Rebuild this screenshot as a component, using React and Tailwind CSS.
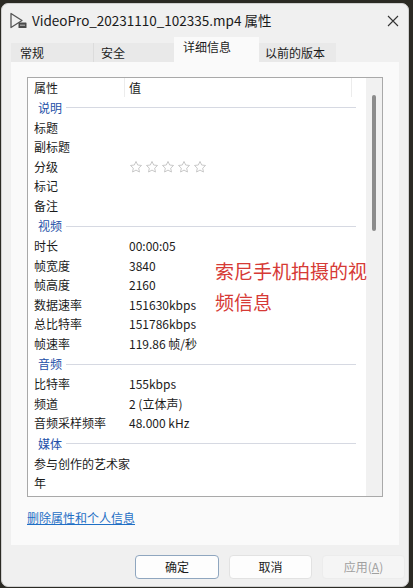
import React from 'react';

const font = { fontFamily: '"Segoe UI", "Noto Sans CJK SC", "Noto Sans", sans-serif' };

const sections = [
  { group: '说明', rows: [['标题', ''], ['副标题', ''], ['分级', 'stars'], ['标记', ''], ['备注', '']] },
  {
    group: '视频',
    rows: [
      ['时长', '00:00:05'],
      ['帧宽度', '3840'],
      ['帧高度', '2160'],
      ['数据速率', '151630kbps'],
      ['总比特率', '151786kbps'],
      ['帧速率', '119.86 帧/秒'],
    ],
  },
  { group: '音频', rows: [['比特率', '155kbps'], ['频道', '2 (立体声)'], ['音频采样频率', '48.000 kHz']] },
  { group: '媒体', rows: [['参与创作的艺术家', ''], ['年', ''], ['流派', '']] },
];

function Star() {
  return (
    <svg width="14" height="14" viewBox="0 0 24 24" fill="none" stroke="#c4c4c4" strokeWidth="1.6" strokeLinejoin="round">
      <path d="M12 2.5l2.9 6.1 6.6.8-4.9 4.6 1.3 6.6L12 17.3l-5.9 3.3 1.3-6.6-4.9-4.6 6.6-.8z" />
    </svg>
  );
}

function FileIcon() {
  return (
    <svg width="18" height="17" viewBox="0 0 18 17" fill="none">
      <path d="M2 1.5v14l11-7z" stroke="#555" strokeWidth="1.3" strokeLinejoin="round" />
      <rect x="9.5" y="10.5" width="8" height="5.5" rx="0.6" fill="#4a4a4a" />
      <path d="M11 13.2h5" stroke="#ddd" strokeWidth="0.8" />
    </svg>
  );
}

function Row({ label, value }) {
  return (
    <div className="flex items-center h-[19.5px] text-[12px] text-[#1b1b1b] whitespace-nowrap">
      <div className="w-[101px] pl-[6px] shrink-0">{label}</div>
      <div className="flex items-center">
        {value === 'stars' ? (
          <div className="flex gap-[2px]">
            {[0, 1, 2, 3, 4].map(i => <Star key={i} />)}
          </div>
        ) : (
          value
        )}
      </div>
    </div>
  );
}

function Group({ name }) {
  return (
    <div className="flex items-center h-[21px] pl-[10px] pr-[10px] text-[12px] text-[#2450a8]">
      <span>{name}</span>
      <div className="flex-1 h-px bg-[#d6d9e2] ml-[4px]" />
    </div>
  );
}

export default function App() {
  return (
    <div className="w-[413px] h-[588px] bg-[#2b2a24] overflow-hidden" style={font}>
      <div className="mt-[3px] ml-[1px] w-[408px] h-[584px] bg-[#f0f0f0] rounded-[7px] border border-[#cfcfcf] flex flex-col">
        {/* Title bar */}
        <div className="h-[33px] flex items-center pl-[7px] pr-[9px] shrink-0">
          <FileIcon />
          <span className="ml-[5px] text-[13.5px] text-[#1a1a1a] flex-1">VideoPro_20231110_102335.mp4 属性</span>
          <svg width="12" height="12" viewBox="0 0 12 12" stroke="#333" strokeWidth="1.1">
            <path d="M1 1l10 10M11 1L1 11" />
          </svg>
        </div>

        {/* Tabs */}
        <div className="h-[25px] flex items-end pl-[9px] shrink-0 text-[12px] text-[#1b1b1b]">
          <div className="w-[83px] h-[19px] bg-[#e9e9e9] border-r border-[#dcdcdc] pl-[9px] flex items-center">常规</div>
          <div className="w-[80px] h-[19px] bg-[#e9e9e9] pl-[7px] flex items-center">安全</div>
          <div className="w-[85px] h-[25px] bg-[#fafafa] pl-[9px] pb-[6px] flex items-center">详细信息</div>
          <div className="w-[77px] h-[19px] bg-[#e9e9e9] pl-[6px] flex items-center">以前的版本</div>
        </div>

        {/* Panel */}
        <div className="mx-[9px] h-[483px] bg-[#fafafa] pt-[15px] px-[16px] shrink-0">
          <div className="h-[420px] border border-[#a9a9a9] bg-white flex overflow-hidden relative">
            <div className="flex-1 flex flex-col overflow-hidden">
              <div className="flex h-[19px] items-center text-[12px] text-[#1b1b1b] shrink-0">
                <div className="w-[97px] pl-[6px] h-full flex items-center border-r border-[#ececec]">属性</div>
                <div className="flex-1 pl-[4px] h-full flex items-center border-r border-[#ececec]">值</div>
                <div className="w-[14px]" />
              </div>
              {sections.map(s => (
                <div key={s.group}>
                  <Group name={s.group} />
                  {s.rows.map(([l, v]) => <Row key={l} label={l} value={v} />)}
                </div>
              ))}
            </div>
            <div className="w-[16px] bg-[#f1f1f1] flex justify-center pt-[17px] shrink-0">
              <div className="w-[4px] h-[136px] bg-[#8c8c8c] rounded-full" />
            </div>
            <div className="absolute left-[187px] top-[177px] w-[162px] text-[19px] leading-[31px] text-[#d63a36]">
              索尼手机拍摄的视频信息
            </div>
          </div>
          <div className="mt-[12px] text-[12px] text-[#1f6fc5] underline">删除属性和个人信息</div>
        </div>

        {/* Buttons */}
        <div className="flex-1 flex items-start justify-end pt-[10px] pr-[3px] gap-[10px] text-[12px]">
          <div className="w-[84px] h-[24px] rounded-[4px] bg-[#fdfdfd] border border-[#8fa6bf] flex items-center justify-center text-[#1b1b1b]">确定</div>
          <div className="w-[83px] h-[24px] rounded-[4px] bg-[#fdfdfd] border border-[#e2e2e2] flex items-center justify-center text-[#1b1b1b]">取消</div>
          <div className="w-[83px] h-[24px] rounded-[4px] bg-[#f5f5f5] border border-[#ececec] flex items-center justify-center text-[#a0a0a0]">应用(<span className="underline">A</span>)</div>
        </div>
      </div>
    </div>
  );
}
